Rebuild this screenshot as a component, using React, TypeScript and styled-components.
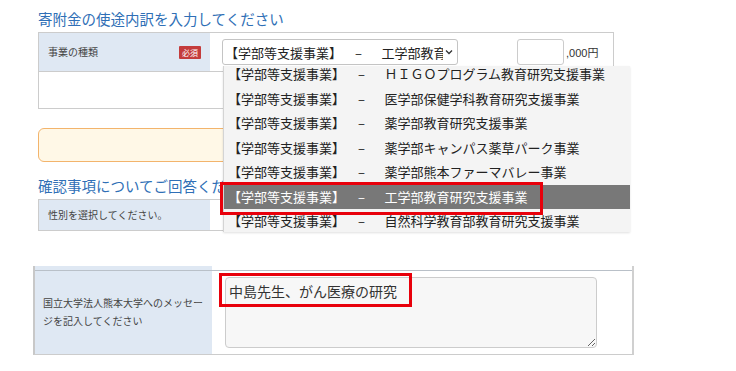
import React from "react";
import styled, { createGlobalStyle } from "styled-components";

const GlobalStyle = createGlobalStyle`
  * {
    box-sizing: border-box;
  }
  body {
    margin: 0;
    background: #fff;
    color: #333;
    font-family: "Noto Sans CJK JP", "Noto Sans", sans-serif;
  }
`;

const options = [
  "ＨＩＧＯプログラム教育研究支援事業",
  "医学部保健学科教育研究支援事業",
  "薬学部教育研究支援事業",
  "薬学部キャンパス薬草パーク事業",
  "薬学部熊本ファーマバレー事業",
  "工学部教育研究支援事業",
  "自然科学教育部教育研究支援事業",
];
const prefix = "【学部等支援事業】\u3000\u2002–\u3000\u2002";

const App = () => {
  const [selected] = React.useState(5);

  return (
    <>
      <GlobalStyle />
      <Page>
        <SectionTitle>寄附金の使途内訳を入力してください</SectionTitle>
        <FormTable>
          <Row $h={38}>
            <Label>
              事業の種類
              <Badge>必須</Badge>
            </Label>
            <Cell>
              <SelectBox>
                <SelectText>{prefix + options[selected]}</SelectText>
                <svg width="8" height="6" viewBox="0 0 8 6">
                  <path d="M1 1.5 L4 4.5 L7 1.5" fill="none" stroke="#333" strokeWidth="1.3" />
                </svg>
                <Dropdown>
                  <OptionList>
                    {options.map((o, i) => (
                      <Option key={o} $active={i === selected}>
                        {prefix + o}
                      </Option>
                    ))}
                  </OptionList>
                  <Mark style={{ left: -4, top: 116, width: 323, height: 33 }} />
                </Dropdown>
              </SelectBox>
              <Amount />
              <Unit>,000円</Unit>
            </Cell>
          </Row>
          <Row $h={37} $line>
            <Cell />
          </Row>
        </FormTable>

        <Notice />

        <SectionTitle $mt={14}>確認事項についてご回答ください</SectionTitle>
        <FormTable>
          <Row $h={30}>
            <Label>性別を選択してください。</Label>
            <Cell />
          </Row>
        </FormTable>

        <MessageTable>
          <Row $h={4}>
            <Label $wide />
            <Cell />
          </Row>
          <Row $h={84} $line $dark>
            <Label $wide $multi>
              国立大学法人熊本大学へのメッセー
              <br />
              ジを記入してください
            </Label>
            <MessageCell>
              <TextWrap>
                <MessageArea readOnly value="中島先生、がん医療の研究" />
                <Mark style={{ left: -6, top: -4, width: 193, height: 34 }} />
              </TextWrap>
            </MessageCell>
          </Row>
        </MessageTable>
      </Page>
    </>
  );
};

export default App;

const Page = styled.div`
  padding: 9px 0 0 38px;
  width: 700px;
`;

const SectionTitle = styled.h2<{ $mt?: number }>`
  margin: ${(p) => p.$mt || 0}px 0 3px;
  font-size: 14.5px;
  line-height: 20px;
  font-weight: 400;
  color: #2f6fb6;
  white-space: nowrap;
`;

const FormTable = styled.div`
  width: 576px;
  border: 1px solid #ccc;
`;

const Row = styled.div<{ $h: number; $line?: boolean; $dark?: boolean }>`
  display: flex;
  height: ${(p) => p.$h}px;
  border-top: ${(p) => (p.$line ? `1px solid ${p.$dark ? "#b9c0c8" : "#ccc"}` : "none")};
`;

const Label = styled.div<{ $wide?: boolean; $multi?: boolean }>`
  width: ${(p) => (p.$wide ? 177 : 171)}px;
  flex-shrink: 0;
  background: #dfe8f3;
  display: ${(p) => (p.$multi ? "block" : "flex")};
  align-items: center;
  justify-content: space-between;
  padding: ${(p) => (p.$multi ? 23 : 0)}px 9px 0 ${(p) => (p.$wide ? 8 : 9)}px;
  font-size: 10px;
  line-height: ${(p) => (p.$multi ? "18px" : "14px")};
  color: #444;
  white-space: nowrap;
`;

const Badge = styled.span`
  background: #c43c3c;
  color: #fff;
  font-size: 8px;
  line-height: 13px;
  padding: 0 3px;
  border-radius: 1px;
`;

const Cell = styled.div`
  flex: 1;
  display: flex;
  align-items: center;
  padding-left: 12px;
`;

const SelectBox = styled.div`
  position: relative;
  width: 236px;
  height: 26px;
  display: flex;
  align-items: center;
  gap: 2px;
  padding: 0 4px 0 2px;
  border: 1px solid #c4c4c4;
  border-radius: 3px;
  background: #fff;
  font-size: 13px;
  color: #222;
`;

const SelectText = styled.span`
  flex: 1;
  overflow: hidden;
  white-space: nowrap;
`;

const Dropdown = styled.div`
  position: absolute;
  left: 0;
  top: 26px;
  width: 407px;
  height: 166px;
  background: #f4f4f4;
  border-left: 1px solid #d4d4d4;
  box-shadow: 0 1px 2px rgba(0, 0, 0, 0.12);
  z-index: 5;
`;

const OptionList = styled.div`
  height: 100%;
  overflow: hidden;
  & > div:first-child {
    margin-top: -4px;
  }
`;

const Option = styled.div<{ $active: boolean }>`
  height: 24.5px;
  line-height: 24.5px;
  padding-left: 4px;
  font-size: 13px;
  white-space: nowrap;
  color: ${(p) => (p.$active ? "#fff" : "#222")};
  background: ${(p) => (p.$active ? "#787878" : "transparent")};
`;

const Mark = styled.div`
  position: absolute;
  border: 3px solid #e8000b;
  pointer-events: none;
  z-index: 6;
`;

const Amount = styled.div`
  width: 47px;
  height: 26px;
  margin-left: 59px;
  border: 1px solid #ccc;
  border-radius: 3px;
  background: #fff;
`;

const Unit = styled.span`
  margin-left: 2px;
  font-family: "Liberation Sans", "Noto Sans CJK JP", sans-serif;
  font-size: 11px;
  color: #333;
`;

const Notice = styled.div`
  width: 576px;
  height: 34px;
  margin-top: 19px;
  border: 1px solid #f3b46c;
  border-radius: 6px;
  background: #fff8e7;
`;

const MessageTable = styled.div`
  width: 601px;
  margin: 35px 0 0 -5px;
  border-left: 2px solid #c8c8c8;
  border-right: 2px solid #d0d0d0;
  border-bottom: 1px solid #ccc;
`;

const MessageCell = styled.div`
  flex: 1;
  padding: 6px 0 0 13px;
`;

const TextWrap = styled.div`
  position: relative;
  width: 372px;
  height: 71px;
`;

const MessageArea = styled.textarea`
  display: block;
  width: 100%;
  height: 100%;
  margin: 0;
  padding: 3px 3px;
  border: 1px solid #ccc;
  border-radius: 4px;
  background: #f7f7f7;
  font-family: "Noto Sans CJK JP", sans-serif;
  font-size: 14px;
  line-height: 20px;
  color: #333;
  resize: vertical;
  outline: none;
`;
